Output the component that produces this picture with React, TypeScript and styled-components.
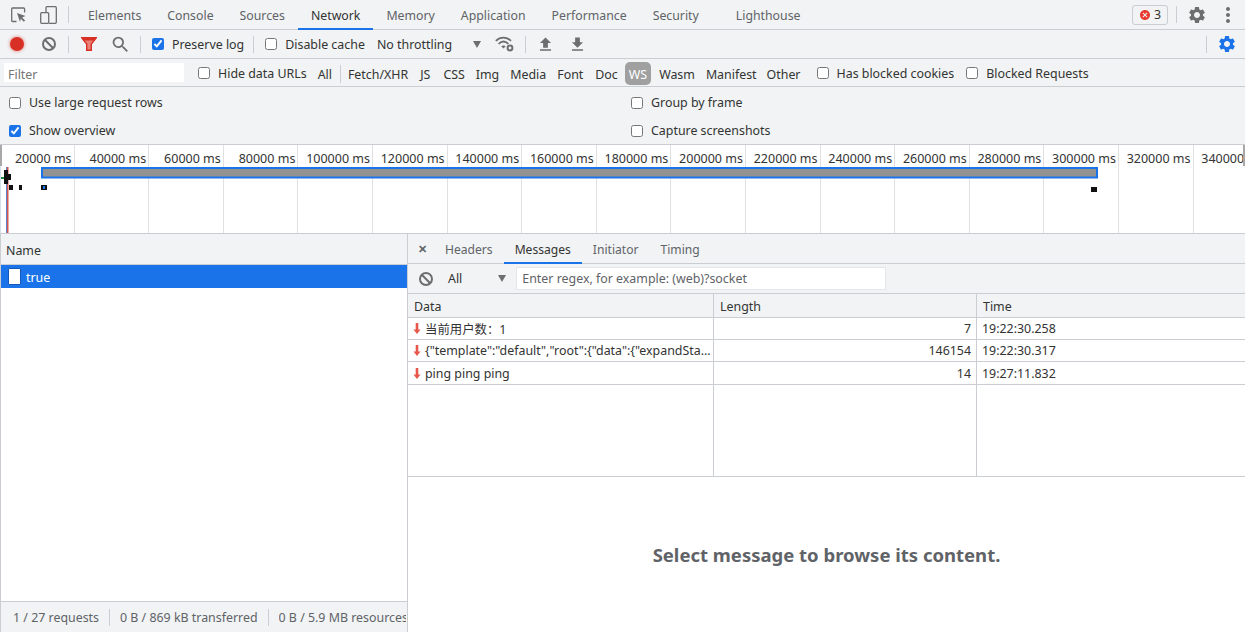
import styled, { createGlobalStyle } from 'styled-components';
import {
  MdCancel,
  MdFileDownload,
  MdFileUpload,
  MdMoreVert,
  MdSearch,
  MdSettings,
} from 'react-icons/md';

const mainTabs = [
  { label: 'Elements' },
  { label: 'Console' },
  { label: 'Sources' },
  { label: 'Network', active: true },
  { label: 'Memory' },
  { label: 'Application' },
  { label: 'Performance' },
  { label: 'Security' },
  { label: 'Lighthouse', wide: true },
];

// gap is the space before each filter, they are not quite even in the real toolbar
const typeFilters = [
  { label: 'JS', gap: 12 },
  { label: 'CSS', gap: 13 },
  { label: 'Img', gap: 11 },
  { label: 'Media', gap: 11 },
  { label: 'Font', gap: 11 },
  { label: 'Doc', gap: 12 },
  { label: 'WS', gap: 7, active: true },
  { label: 'Wasm', gap: 12 },
  { label: 'Manifest', gap: 11 },
  { label: 'Other', gap: 10 },
];

const ticks = Array.from({ length: 17 }, (_, i) => (i + 1) * 20000);

const messages = [
  { data: '当前用户数：1', length: '7', time: '19:22:30.258' },
  { data: '{"template":"default","root":{"data":{"expandSta...', length: '146154', time: '19:22:30.317' },
  { data: 'ping ping ping', length: '14', time: '19:27:11.832' },
];

export default function App() {
  return (
    <Page>
      <GlobalStyle />
      <MainBar>
        <IconSlot $w={32}>
          <InspectIcon />
        </IconSlot>
        <IconSlot $w={28}>
          <DeviceIcon />
        </IconSlot>
        <Divider $mx={6} />
        <Tabs>
          {mainTabs.map((t) => (
            <MainTab key={t.label} $active={t.active} $wide={t.wide}>
              {t.label}
            </MainTab>
          ))}
        </Tabs>
        <MainRight>
          <ErrorBadge>
            <MdCancel size={12} color="#e8392e" />3
          </ErrorBadge>
          <Divider $mx={8} $r={5} />
          <IconSlot $w={30}>
            <MdSettings size={20} color="#6e6e6e" />
          </IconSlot>
          <IconSlot $w={32}>
            <MdMoreVert size={24} color="#6e6e6e" />
          </IconSlot>
        </MainRight>
      </MainBar>

      <ToolBar>
        <IconSlot $w={30}>
          <RecordDot />
        </IconSlot>
        <IconSlot $w={34}>
          <BlockIcon />
        </IconSlot>
        <Divider $mx={2} />
        <IconSlot $w={36}>
          <FunnelIcon />
        </IconSlot>
        <IconSlot $w={26}>
          <MdSearch size={21} color="#6e6e6e" />
        </IconSlot>
        <Divider $mx={7} />
        <Check $ml={4}>
          <input type="checkbox" defaultChecked />
          Preserve log
        </Check>
        <Divider $mx={9} $r={10} />
        <Check $ml={1}>
          <input type="checkbox" />
          Disable cache
        </Check>
        <Throttle>No throttling</Throttle>
        <Caret $ml={21} />
        <IconSlot $w={29} $ml={9}>
          <WifiIcon />
        </IconSlot>
        <Divider $mx={6} />
        <IconSlot $w={26}>
          <MdFileUpload size={19} color="#6e6e6e" />
        </IconSlot>
        <IconSlot $w={38}>
          <MdFileDownload size={19} color="#6e6e6e" />
        </IconSlot>
        <ToolRight>
          <Divider $mx={8} />
          <IconSlot $w={24}>
            <MdSettings size={20} color="#1a73e8" />
          </IconSlot>
        </ToolRight>
      </ToolBar>

      <FilterBar>
        <FilterInput placeholder="Filter" />
        <Check $ml={14}>
          <input type="checkbox" />
          Hide data URLs
        </Check>
        <TypeItem $gap={11}>All</TypeItem>
        <Divider $mx={8} $r={7} $h={18} />
        <TypeItem $gap={0}>Fetch/XHR</TypeItem>
        {typeFilters.map((f) => (
          <TypeItem key={f.label} $gap={f.gap} $active={f.active}>
            {f.label}
          </TypeItem>
        ))}
        <Check $ml={16}>
          <input type="checkbox" />
          Has blocked cookies
        </Check>
        <Check $ml={12}>
          <input type="checkbox" />
          Blocked Requests
        </Check>
      </FilterBar>

      <Settings>
        <Check>
          <input type="checkbox" />
          Use large request rows
        </Check>
        <Check>
          <input type="checkbox" />
          Group by frame
        </Check>
        <Check>
          <input type="checkbox" defaultChecked />
          Show overview
        </Check>
        <Check>
          <input type="checkbox" />
          Capture screenshots
        </Check>
      </Settings>

      <Overview>
        {ticks.map((t) => (
          <Tick key={t}>{t} ms</Tick>
        ))}
        <OverviewGraph viewBox="0 0 1245 88" width="1245" height="88">
          <rect x="0" y="0" width="2" height="21" fill="#a8a8a8" />
          <rect x="1243" y="0" width="2" height="21" fill="#a8a8a8" />
          <rect x="0" y="21" width="1" height="67" fill="#d5dff0" />
          <rect x="6" y="22" width="1" height="66" fill="#5b86cf" />
          <rect x="7" y="22" width="1.5" height="66" fill="#d8574c" />
          <rect x="1" y="32" width="3" height="2" fill="#1e8e3e" />
          <rect x="4" y="29" width="7" height="6" fill="#111" />
          <rect x="4" y="25" width="4" height="14" fill="#111" />
          <rect x="9" y="40" width="4" height="5" fill="#111" />
          <rect x="19" y="40" width="3" height="5" fill="#111" />
          <rect x="41" y="40" width="6" height="5" fill="#111" />
          <rect x="43" y="41" width="2" height="3" fill="#1a73e8" />
          <rect x="41" y="26" width="2" height="6" fill="#111" />
          <rect x="1091" y="42" width="6" height="5" fill="#111" />
          <rect x="42" y="23" width="1055" height="9.5" fill="#929292" stroke="#1a73e8" strokeWidth="2" />
        </OverviewGraph>
      </Overview>

      <Split>
        <RequestPane>
          <NameHeader>Name</NameHeader>
          <RequestRow>
            <FileChip />
            <RowLabel>true</RowLabel>
          </RequestRow>
          <RequestFill />
          <StatusBar>
            <StatusItem>1 / 27 requests</StatusItem>
            <StatusItem>0 B / 869 kB transferred</StatusItem>
            <StatusItem>0 B / 5.9 MB resources</StatusItem>
          </StatusBar>
        </RequestPane>

        <DetailPane>
          <DetailTabs>
            <CloseMark>✕</CloseMark>
            <DetailTab>Headers</DetailTab>
            <DetailTab $active>Messages</DetailTab>
            <DetailTab>Initiator</DetailTab>
            <DetailTab>Timing</DetailTab>
          </DetailTabs>
          <MessageFilter>
            <IconSlot $w={36}>
              <BlockIcon />
            </IconSlot>
            <SelectLabel>All</SelectLabel>
            <Caret $ml={36} />
            <RegexInput placeholder="Enter regex, for example: (web)?socket" />
          </MessageFilter>
          <MessageTable>
            <HeadCell>Data</HeadCell>
            <HeadCell>Length</HeadCell>
            <HeadCell>Time</HeadCell>
            {messages.map((m) => (
              <MessageRow key={m.time}>
                <DataCell>
                  <DownArrow viewBox="0 0 8 11" width="8" height="11">
                    <path d="M2.7 0h2.6v6.5H7.5L4 11 .5 6.5h2.2z" fill="#e8574c" />
                  </DownArrow>
                  {m.data}
                </DataCell>
                <LengthCell>{m.length}</LengthCell>
                <BodyCell>{m.time}</BodyCell>
              </MessageRow>
            ))}
            <FillCell />
            <FillCell />
            <FillCell />
          </MessageTable>
          <EmptyState>Select message to browse its content.</EmptyState>
        </DetailPane>
      </Split>
    </Page>
  );
}

function InspectIcon() {
  return (
    <svg width="15" height="16" viewBox="0 0 15 16" fill="none">
      <path d="M5.5 14.5H1.6A1 1 0 0 1 .7 13.5V2A1 1 0 0 1 1.6 1h11a1 1 0 0 1 1 1v3.5" stroke="#6e6e6e" strokeWidth="1.3" />
      <path d="M6 6l8.5 3-3.4 1.4 3 3-1.3 1.3-3-3L9 15z" fill="#6e6e6e" />
    </svg>
  );
}

function DeviceIcon() {
  return (
    <svg width="17" height="18" viewBox="0 0 17 18" fill="none">
      <path d="M6 6V1.7A1 1 0 0 1 7 .7h8.3a1 1 0 0 1 1 1v14.6a1 1 0 0 1-1 1H9" stroke="#6e6e6e" strokeWidth="1.3" />
      <rect x=".7" y="6.7" width="8" height="10.6" rx="1" stroke="#6e6e6e" strokeWidth="1.3" />
    </svg>
  );
}

function BlockIcon() {
  return (
    <svg width="14" height="14" viewBox="0 0 14 14" fill="none">
      <circle cx="7" cy="7" r="6" stroke="#6e6e6e" strokeWidth="2" />
      <path d="M2.8 2.8l8.4 8.4" stroke="#6e6e6e" strokeWidth="2" />
    </svg>
  );
}

function FunnelIcon() {
  return (
    <svg width="16" height="14" viewBox="0 0 16 14">
      <path d="M0.7 0.7h14.6l-5 6.4v6.2H5.7V7.1z" fill="#ea8077" stroke="#d93025" strokeWidth="1.4" />
      <path d="M1 0.5h14l-2.2 3H3.2z" fill="#d93025" />
    </svg>
  );
}

function WifiIcon() {
  return (
    <svg width="19" height="16" viewBox="0 0 19 16" fill="none">
      <path d="M.8 4.8c4.6-4.3 10.6-4.3 15.2 0" stroke="#6e6e6e" strokeWidth="1.8" />
      <path d="M3.6 7.8c3-2.8 6.8-2.8 9.8 0" stroke="#6e6e6e" strokeWidth="1.8" />
      <path d="M6.2 10.2c1.5-1 3-1 4.5 0L8.5 12.4z" fill="#6e6e6e" />
      <circle cx="15" cy="12" r="2.4" stroke="#6e6e6e" strokeWidth="2" />
    </svg>
  );
}

const GlobalStyle = createGlobalStyle`
  html, body {
    margin: 0;
    height: 632px;
    overflow: hidden;
    background: #fff;
  }
  * {
    box-sizing: border-box;
  }
  input[type='checkbox'] {
    accent-color: #1a73e8;
    margin: 0;
    width: 12px;
    height: 12px;
    flex: none;
  }
`;

const Page = styled.div`
  width: 1245px;
  height: 632px;
  display: flex;
  flex-direction: column;
  font-family: 'Noto Sans', 'Noto Sans CJK SC', sans-serif;
  font-size: 12.4px;
  color: #303942;
  overflow: hidden;
`;

const MainBar = styled.div`
  height: 30px;
  flex: none;
  display: flex;
  align-items: center;
  padding-left: 2px;
  background: #f1f3f4;
  border-bottom: 1px solid #cacdd1;
`;

const IconSlot = styled.div<{ $w: number; $ml?: number }>`
  width: ${({ $w }) => $w}px;
  margin-left: ${({ $ml }) => $ml || 0}px;
  flex: none;
  display: flex;
  align-items: center;
  justify-content: center;
`;

const Divider = styled.div<{ $mx: number; $h?: number; $r?: number }>`
  width: 1px;
  height: ${({ $h }) => $h || 17}px;
  margin: 0 ${({ $mx, $r }) => ($r !== undefined ? $r : $mx)}px 0 ${({ $mx }) => $mx}px;
  background: #cacdd1;
  flex: none;
`;

const Tabs = styled.div`
  display: flex;
  align-self: stretch;
`;

const MainTab = styled.div<{ $active?: boolean; $wide?: boolean }>`
  display: flex;
  align-items: center;
  padding: 0 13px;
  margin-left: ${({ $wide }) => ($wide ? 11 : 0)}px;
  font-size: 12.3px;
  color: ${({ $active }) => ($active ? '#333' : '#5f6368')};
  box-shadow: ${({ $active }) => ($active ? 'inset 0 -2px 0 #1a73e8' : 'none')};
  margin-bottom: -1px;
  white-space: nowrap;
`;

const MainRight = styled.div`
  margin-left: auto;
  display: flex;
  align-items: center;
  padding-right: 1px;
`;

const ErrorBadge = styled.div`
  width: 36px;
  height: 20px;
  display: flex;
  align-items: center;
  justify-content: center;
  gap: 3px;
  background: #f1f3f4;
  border: 1px solid #cacdd1;
  border-radius: 3px;
  color: #333;
`;

const ToolBar = styled.div`
  height: 29px;
  flex: none;
  display: flex;
  align-items: center;
  padding-left: 2px;
  background: #f1f3f4;
  border-bottom: 1px solid #cacdd1;
`;

const RecordDot = styled.div`
  width: 14px;
  height: 14px;
  border-radius: 50%;
  background: #d93025;
  box-shadow: 0 0 3px 1px rgba(217, 48, 37, 0.35);
`;

const Check = styled.label<{ $ml?: number }>`
  display: flex;
  align-items: center;
  gap: 8px;
  margin-left: ${({ $ml }) => $ml || 0}px;
  color: #333;
  white-space: nowrap;
  flex: none;
`;

const Throttle = styled.span`
  margin-left: 12px;
  color: #333;
  flex: none;
`;

const Caret = styled.span<{ $ml: number }>`
  width: 0;
  height: 0;
  flex: none;
  margin-left: ${({ $ml }) => $ml}px;
  border-left: 4.5px solid transparent;
  border-right: 4.5px solid transparent;
  border-top: 7px solid #6e6e6e;
`;

const ToolRight = styled.div`
  margin-left: auto;
  display: flex;
  align-items: center;
  padding-right: 6px;
`;

const FilterBar = styled.div`
  height: 28px;
  flex: none;
  display: flex;
  align-items: center;
  padding: 2px 0 0 4px;
  background: #f1f3f4;
  border-bottom: 1px solid #cacdd1;

  ${Check} {
    margin-bottom: 1px;
  }
`;

const FilterInput = styled.input`
  width: 180px;
  height: 19px;
  margin-bottom: 2px;
  border: none;
  outline: none;
  padding: 3px 4px 0;
  background: #fff;
  font: inherit;
  flex: none;
  &::placeholder {
    color: #757575;
  }
`;

const TypeItem = styled.span<{ $active?: boolean; $gap: number }>`
  display: flex;
  align-items: center;
  height: 23px;
  padding: 1px ${({ $active }) => ($active ? 4 : 0)}px 0;
  margin-left: ${({ $gap }) => $gap}px;
  margin-right: ${({ $active }) => ($active ? -4 : 0)}px;
  border-radius: 5px;
  background: ${({ $active }) => ($active ? '#a0a0a0' : 'transparent')};
  color: ${({ $active }) => ($active ? '#fff' : '#333')};
  flex: none;
`;

const Settings = styled.div`
  height: 58px;
  flex: none;
  display: grid;
  grid-template-columns: 622px 1fr;
  grid-auto-rows: 28px;
  align-content: center;
  padding: 2px 0 0 9px;
  background: #f1f3f4;
  border-bottom: 1px solid #cacdd1;
`;

const Overview = styled.div`
  position: relative;
  height: 89px;
  flex: none;
  display: flex;
  background: #fff;
  border-bottom: 1px solid #cacdd1;
  overflow: hidden;
`;

const Tick = styled.div`
  width: 74.6px;
  flex: none;
  padding: 5px 2px 0 0;
  font-size: 12.5px;
  text-align: right;
  color: #333;
  white-space: nowrap;
  border-right: 1px solid #e0e0e0;
`;

const OverviewGraph = styled.svg`
  position: absolute;
  left: 0;
  top: 0;
`;

const Split = styled.div`
  flex: 1;
  min-height: 0;
  display: flex;
`;

const RequestPane = styled.div`
  width: 408px;
  flex: none;
  display: flex;
  flex-direction: column;
  border-right: 1px solid #cacdd1;
  border-left: 1px solid #cacdd1;
`;

const NameHeader = styled.div`
  height: 31px;
  flex: none;
  display: flex;
  align-items: center;
  padding: 2px 0 0 5px;
  background: #f1f3f4;
  border-bottom: 1px solid #cacdd1;
  color: #333;
`;

const RequestRow = styled.div`
  height: 23px;
  flex: none;
  display: flex;
  align-items: center;
  gap: 5px;
  padding-left: 7px;
  background: #1a73e8;
  color: #fff;
`;

const RowLabel = styled.span`
  padding-top: 1px;
`;

const FileChip = styled.span`
  width: 13px;
  height: 17px;
  background: #fff;
  border: 1px solid #1559b7;
  border-radius: 1px;
`;

const RequestFill = styled.div`
  flex: 1;
`;

const StatusBar = styled.div`
  height: 31px;
  flex: none;
  display: flex;
  align-items: center;
  padding-left: 12px;
  background: #f1f3f4;
  border-top: 1px solid #cacdd1;
  color: #5f6368;
  overflow: hidden;
  white-space: nowrap;
`;

const StatusItem = styled.span`
  flex: none;
  padding-right: 10px;
  margin-right: 10px;
  border-right: 1px solid #cacdd1;
  line-height: 17px;
  &:last-child {
    border-right: none;
    padding-right: 0;
    margin-right: 0;
    max-width: 127px;
    overflow: hidden;
  }
`;

const DetailPane = styled.div`
  flex: 1;
  min-width: 0;
  display: flex;
  flex-direction: column;
`;

const DetailTabs = styled.div`
  height: 30px;
  flex: none;
  display: flex;
  background: #f1f3f4;
  border-bottom: 1px solid #cacdd1;
`;

const CloseMark = styled.span`
  width: 26px;
  display: flex;
  align-items: center;
  justify-content: center;
  padding-left: 2px;
  color: #5f6368;
  font-size: 11px;
  font-weight: 700;
`;

const DetailTab = styled.div<{ $active?: boolean }>`
  display: flex;
  align-items: center;
  padding: 0 11px;
  margin-bottom: -1px;
  font-size: 12.1px;
  color: ${({ $active }) => ($active ? '#333' : '#5f6368')};
  box-shadow: ${({ $active }) => ($active ? 'inset 0 -2px 0 #1a73e8' : 'none')};
`;

const MessageFilter = styled.div`
  height: 30px;
  flex: none;
  display: flex;
  align-items: center;
  background: #f1f3f4;
  border-bottom: 1px solid #cacdd1;
`;

const SelectLabel = styled.span`
  margin-left: 4px;
  color: #333;
`;

const RegexInput = styled.input`
  width: 370px;
  height: 23px;
  margin-left: 10px;
  padding: 0 5px;
  border: 1px solid #e4e6e8;
  outline: none;
  background: #fff;
  font: inherit;
  &::placeholder {
    color: #5f6368;
  }
`;

const MessageTable = styled.div`
  height: 183px;
  flex: none;
  display: grid;
  grid-template-columns: 306px 263px 1fr;
  grid-template-rows: 24px 22px 22px 23px 1fr;
  border-bottom: 1px solid #cacdd1;
`;

const HeadCell = styled.div`
  display: flex;
  align-items: center;
  padding: 1px 0 0 6px;
  background: #f1f3f4;
  color: #333;
  border-bottom: 1px solid #cacdd1;
  border-right: 1px solid #cacdd1;
  &:nth-child(3) {
    border-right: none;
  }
`;

const MessageRow = styled.div`
  display: contents;
`;

const BodyCell = styled.div`
  display: flex;
  align-items: center;
  padding: 0 5px;
  color: #333;
  white-space: nowrap;
  overflow: hidden;
  border-bottom: 1px solid #cacdd1;
`;

const DataCell = styled(BodyCell)`
  gap: 4px;
  border-right: 1px solid #cacdd1;
`;

const LengthCell = styled(BodyCell)`
  justify-content: flex-end;
  border-right: 1px solid #cacdd1;
`;

const DownArrow = styled.svg`
  flex: none;
`;

const FillCell = styled.div`
  border-right: 1px solid #cacdd1;
  &:last-child {
    border-right: none;
  }
`;

const EmptyState = styled.div`
  flex: 1;
  display: flex;
  align-items: center;
  justify-content: center;
  font-size: 18.5px;
  font-weight: 700;
  color: #5f6368;
`;
